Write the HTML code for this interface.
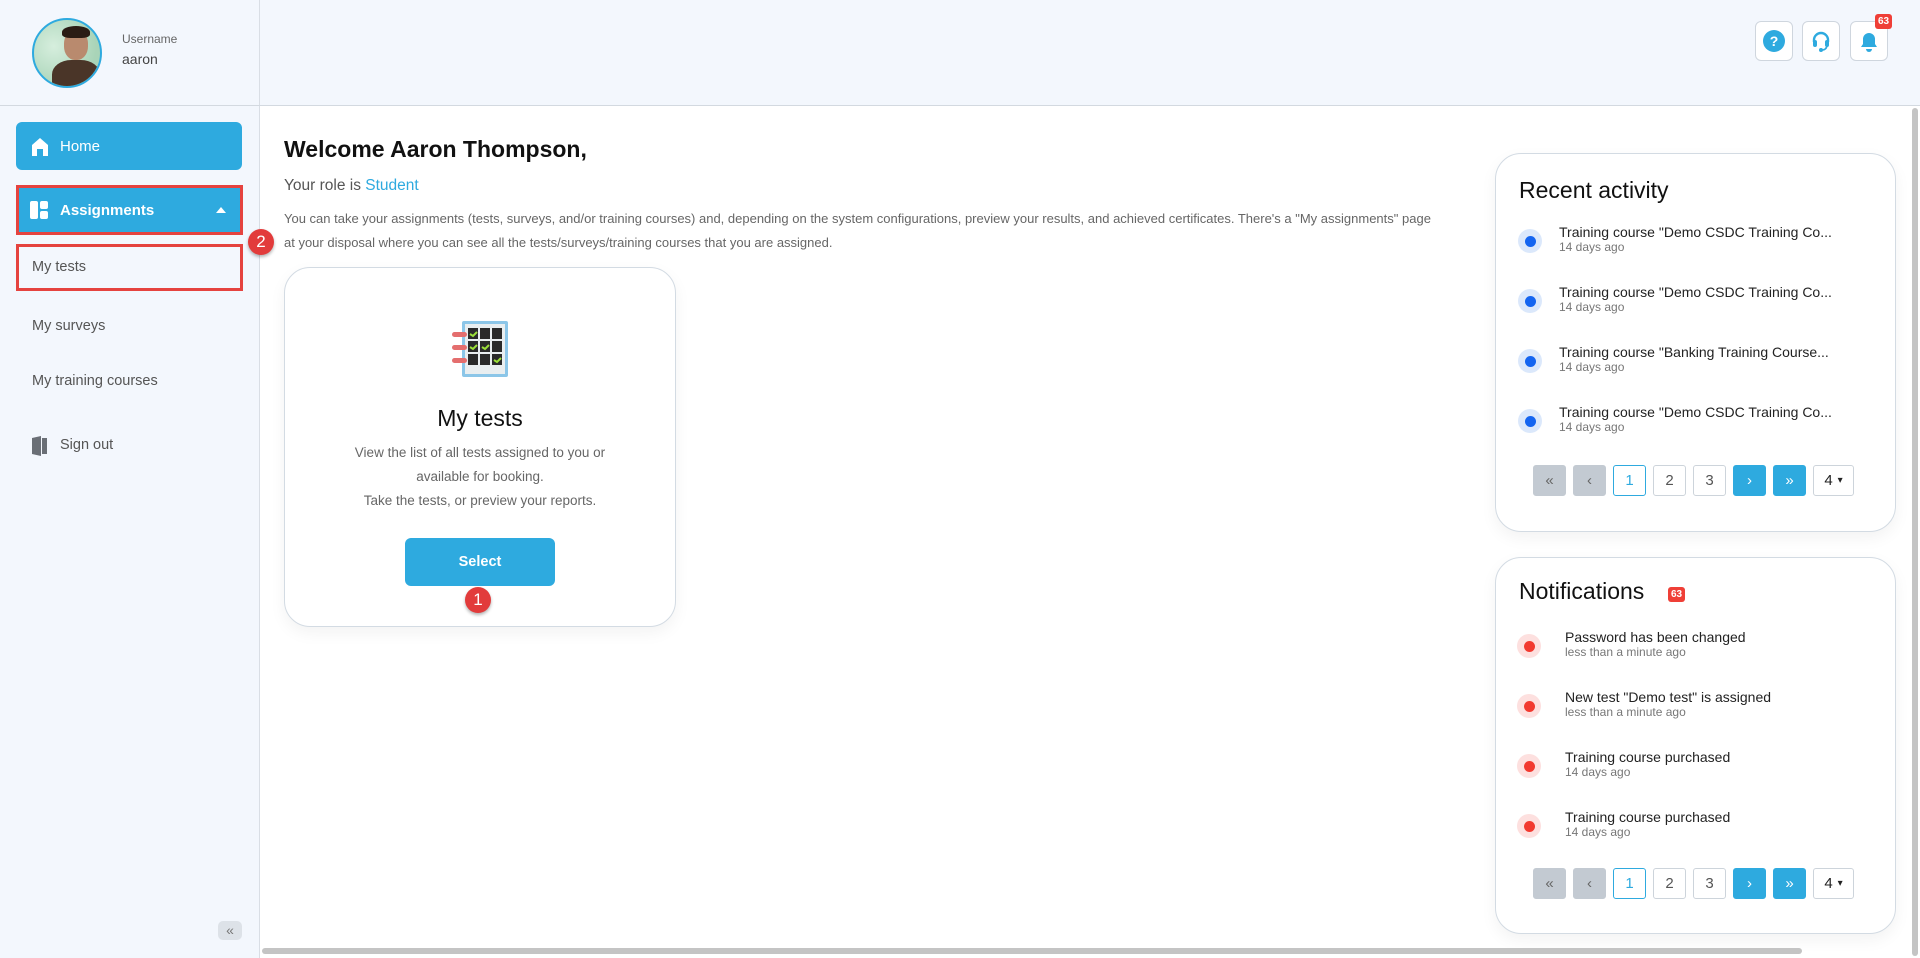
<!DOCTYPE html>
<html><head><meta charset="utf-8"><style>
*{box-sizing:border-box;margin:0;padding:0}
body{width:1920px;height:958px;overflow:hidden;font-family:"Liberation Sans",sans-serif;background:#fff;position:relative;color:#222}
.a{position:absolute}
.side{left:0;top:0;width:260px;height:958px;background:#f3f7fd;border-right:1px solid #d9dee5}
.hdr{left:260px;top:0;width:1660px;height:106px;background:#f3f7fd;border-bottom:1px solid #d3d9e0}
.sideh{left:0;top:105px;width:260px;height:1px;background:#d3d9e0}
.nav{left:16px;width:226px;height:48px;border-radius:6px;background:#2eaadf;color:#fff;font-size:15px;display:flex;align-items:center;padding-left:44px}
.sub{left:32px;font-size:14.5px;color:#555}
.ib{width:38px;height:40px;border:1px solid #cfd6de;border-radius:6px;background:#fff;display:flex;align-items:center;justify-content:center}
.card{border:1px solid #d3dbe3;border-radius:26px;background:#fff;box-shadow:0 6px 16px rgba(0,0,0,.05)}
.it{font-size:14px;color:#222;white-space:nowrap}
.tm{font-size:12px;color:#777;white-space:nowrap}
.pg{width:33px;height:31px;border:1px solid #cdd4db;border-radius:3px;display:flex;align-items:center;justify-content:center;font-size:15px;color:#555;background:#fff}
.pg.g{background:#c3cad2;border-color:#c3cad2;color:#666}
.pg.b{background:#2eaadf;border-color:#2eaadf;color:#fff}
.pg.c{border-color:#2eaadf;color:#2eaadf}
.dot{width:24px;height:24px;border-radius:50%;display:flex;align-items:center;justify-content:center}
.dot i{width:11px;height:11px;border-radius:50%;display:block}
.num{width:26px;height:26px;border-radius:50%;background:#e23b3b;color:#fff;font-size:17px;display:flex;align-items:center;justify-content:center;box-shadow:0 2px 3px rgba(0,0,0,.3)}
</style></head><body>
<div class="a side"></div>
<div class="a hdr"></div>
<div class="a sideh"></div>
<div class="a" style="left:32px;top:18px;width:70px;height:70px;border-radius:50%;border:2px solid #2eaadf;background:radial-gradient(circle at 30% 40%,#d6eedd,#a9d4b8 70%);overflow:hidden">
<div class="a" style="left:30px;top:10px;width:24px;height:30px;border-radius:45%;background:#b98a6e"></div>
<div class="a" style="left:28px;top:6px;width:28px;height:12px;border-radius:50% 50% 30% 30%;background:#2a1c14"></div>
<div class="a" style="left:18px;top:40px;width:48px;height:36px;border-radius:40% 40% 0 0;background:#4a3528"></div>
</div>
<div class="a" style="left:122px;top:32px;font-size:12px;color:#666">Username</div>
<div class="a" style="left:122px;top:51px;font-size:14px;color:#444">aaron</div>
<div class="a nav" style="top:122px">Home</div>
<svg class="a" style="left:31px;top:137px" width="18" height="19" viewBox="0 0 18 19"><path d="M1 8 L9 1 L17 8 V19 H12 V12 H6 V19 H1Z" fill="#fff"/></svg>
<div class="a nav" style="top:186px;font-weight:bold;border-radius:0">Assignments</div>
<div class="a" style="left:16px;top:185px;width:227px;height:50px;border:3px solid #e5433f"></div>
<svg class="a" style="left:30px;top:201px" width="18" height="18" viewBox="0 0 18 18"><rect x="0" y="0" width="8" height="18" rx="2" fill="#fff"/><rect x="10" y="0" width="8" height="8" rx="2" fill="#fff"/><rect x="10" y="10" width="8" height="8" rx="2" fill="#fff"/></svg>
<svg class="a" style="left:216px;top:207px" width="10" height="6"><path d="M0 6 L5 0 L10 6Z" fill="#fff"/></svg>
<div class="a" style="left:16px;top:244px;width:227px;height:47px;border:3px solid #e5433f"></div>
<div class="a sub" style="top:259px">My tests</div>
<div class="a num" style="left:248px;top:229px">2</div>
<div class="a sub" style="top:318px">My surveys</div>
<div class="a sub" style="top:373px">My training courses</div>
<svg class="a" style="left:32px;top:436px" width="16" height="20"><path d="M0 2 L9 0 V20 L0 18Z" fill="#6a6f76"/><rect x="10" y="2" width="5" height="16" fill="#6a6f76"/></svg>
<div class="a sub" style="left:60px;top:437px">Sign out</div>
<div class="a" style="left:218px;top:921px;width:24px;height:19px;border-radius:5px;background:#dde2e8;color:#777;font-size:14px;text-align:center;line-height:18px">«</div>
<div class="a ib" style="left:1755px;top:21px"><div style="width:22px;height:22px;border-radius:50%;background:#2eaadf;color:#fff;font-weight:bold;font-size:14px;text-align:center;line-height:22px">?</div></div>
<div class="a ib" style="left:1802px;top:21px"><svg width="22" height="22" viewBox="0 0 22 22"><path d="M4 12 V10 A7 7 0 0 1 18 10 V12" stroke="#2eaadf" stroke-width="2.4" fill="none"/><rect x="3" y="10" width="4" height="7" rx="2" fill="#2eaadf"/><rect x="15" y="10" width="4" height="7" rx="2" fill="#2eaadf"/><circle cx="11" cy="20" r="2" fill="#2eaadf"/><path d="M17 16 Q16 20 12 20" stroke="#2eaadf" stroke-width="1.6" fill="none"/></svg></div>
<div class="a ib" style="left:1850px;top:21px"><svg width="24" height="24" viewBox="0 0 24 24"><path d="M4 18 H20 L18 15 V10 A6 6 0 0 0 6 10 V15Z" fill="#2eaadf"/><path d="M9 20 A3 3 0 0 0 15 20Z" fill="#2eaadf"/></svg></div>
<div class="a" style="left:1875px;top:14px;background:#ef3f37;color:#fff;font-size:10px;font-weight:bold;border-radius:3px;padding:2px 3px">63</div>
<div class="a" style="left:284px;top:136px;font-size:23px;font-weight:bold;color:#111">Welcome Aaron Thompson,</div>
<div class="a" style="left:284px;top:177px;font-size:15.5px;color:#555">Your role is <span style="color:#2eaadf">Student</span></div>
<div class="a" style="left:284px;top:207px;width:1150px;font-size:13px;color:#666;line-height:24px">You can take your assignments (tests, surveys, and/or training courses) and, depending on the system configurations, preview your results, and achieved certificates. There's a "My assignments" page at your disposal where you can see all the tests/surveys/training courses that you are assigned.</div>
<div class="a card" style="left:284px;top:267px;width:392px;height:360px"></div>
<svg class="a" style="left:452px;top:321px" width="60" height="56" viewBox="0 0 60 56"><rect x="10" y="0" width="46" height="56" rx="2" fill="#8cc6e8"/><rect x="13" y="3" width="40" height="50" fill="#e9eef0"/><g fill="#2a2a2a"><rect x="16" y="7" width="10" height="11"/><rect x="28" y="7" width="10" height="11"/><rect x="40" y="7" width="10" height="11"/><rect x="16" y="20" width="10" height="11"/><rect x="28" y="20" width="10" height="11"/><rect x="40" y="20" width="10" height="11"/><rect x="16" y="33" width="10" height="11"/><rect x="28" y="33" width="10" height="11"/><rect x="40" y="33" width="10" height="11"/></g><g stroke="#9be038" stroke-width="2" fill="none"><path d="M18 13 l3 2 l4 -4"/><path d="M18 26 l3 2 l4 -4"/><path d="M30 26 l3 2 l4 -4"/><path d="M42 39 l3 2 l4 -4"/></g><g fill="#e46e6e"><rect x="0" y="11" width="15" height="5" rx="2.5"/><rect x="0" y="24" width="15" height="5" rx="2.5"/><rect x="0" y="37" width="15" height="5" rx="2.5"/></g></svg>
<div class="a" style="left:284px;top:405px;width:392px;text-align:center;font-size:23px;color:#111">My tests</div>
<div class="a" style="left:284px;top:441px;width:392px;text-align:center;font-size:13.5px;color:#666;line-height:24px">View the list of all tests assigned to you or<br>available for booking.<br>Take the tests, or preview your reports.</div>
<div class="a" style="left:405px;top:538px;width:150px;height:48px;border-radius:6px;background:#2eaadf;color:#fff;font-weight:bold;font-size:14.5px;text-align:center;line-height:48px">Select</div>
<div class="a num" style="left:465px;top:587px">1</div>
<div class="a card" style="left:1495px;top:153px;width:401px;height:379px"></div>
<div class="a" style="left:1519px;top:177px;font-size:23px;color:#111">Recent activity</div>
<div class="a" style="left:1518px;top:229px">
 <div class="a dot" style="top:0;background:#dbe8fb"><i style="background:#1565f0"></i></div><div class="a it" style="left:41px;top:-5px">Training course "Demo CSDC Training Co...</div><div class="a tm" style="left:41px;top:11px">14 days ago</div>
 <div class="a dot" style="top:60px;background:#dbe8fb"><i style="background:#1565f0"></i></div><div class="a it" style="left:41px;top:55px">Training course "Demo CSDC Training Co...</div><div class="a tm" style="left:41px;top:71px">14 days ago</div>
 <div class="a dot" style="top:120px;background:#dbe8fb"><i style="background:#1565f0"></i></div><div class="a it" style="left:41px;top:115px">Training course "Banking Training Course...</div><div class="a tm" style="left:41px;top:131px">14 days ago</div>
 <div class="a dot" style="top:180px;background:#dbe8fb"><i style="background:#1565f0"></i></div><div class="a it" style="left:41px;top:175px">Training course "Demo CSDC Training Co...</div><div class="a tm" style="left:41px;top:191px">14 days ago</div>
</div>
<div class="a" style="left:1533px;top:465px;display:flex;gap:7px">
<div class="pg g">«</div><div class="pg g">‹</div><div class="pg c">1</div><div class="pg">2</div><div class="pg">3</div><div class="pg b">›</div><div class="pg b">»</div><div class="pg" style="width:41px;color:#222">4 <span style="font-size:10px;margin-left:5px">▾</span></div></div>
<div class="a card" style="left:1495px;top:557px;width:401px;height:377px"></div>
<div class="a" style="left:1519px;top:578px;font-size:23px;color:#111">Notifications</div>
<div class="a" style="left:1668px;top:587px;background:#ef3f37;color:#fff;font-size:10px;font-weight:bold;border-radius:3px;padding:2px 3px">63</div>
<div class="a" style="left:1517px;top:634px">
 <div class="a dot" style="top:0;background:#fde0df"><i style="background:#f23a30"></i></div><div class="a it" style="left:48px;top:-5px">Password has been changed</div><div class="a tm" style="left:48px;top:11px">less than a minute ago</div>
 <div class="a dot" style="top:60px;background:#fde0df"><i style="background:#f23a30"></i></div><div class="a it" style="left:48px;top:55px">New test "Demo test" is assigned</div><div class="a tm" style="left:48px;top:71px">less than a minute ago</div>
 <div class="a dot" style="top:120px;background:#fde0df"><i style="background:#f23a30"></i></div><div class="a it" style="left:48px;top:115px">Training course purchased</div><div class="a tm" style="left:48px;top:131px">14 days ago</div>
 <div class="a dot" style="top:180px;background:#fde0df"><i style="background:#f23a30"></i></div><div class="a it" style="left:48px;top:175px">Training course purchased</div><div class="a tm" style="left:48px;top:191px">14 days ago</div>
</div>
<div class="a" style="left:1533px;top:868px;display:flex;gap:7px">
<div class="pg g">«</div><div class="pg g">‹</div><div class="pg c">1</div><div class="pg">2</div><div class="pg">3</div><div class="pg b">›</div><div class="pg b">»</div><div class="pg" style="width:41px;color:#222">4 <span style="font-size:10px;margin-left:5px">▾</span></div></div>
<div class="a" style="left:1912px;top:108px;width:6px;height:848px;background:#c4c4c4;border-radius:3px"></div>
<div class="a" style="left:262px;top:948px;width:1540px;height:6px;background:#c4c4c4;border-radius:3px"></div>
</body></html>
